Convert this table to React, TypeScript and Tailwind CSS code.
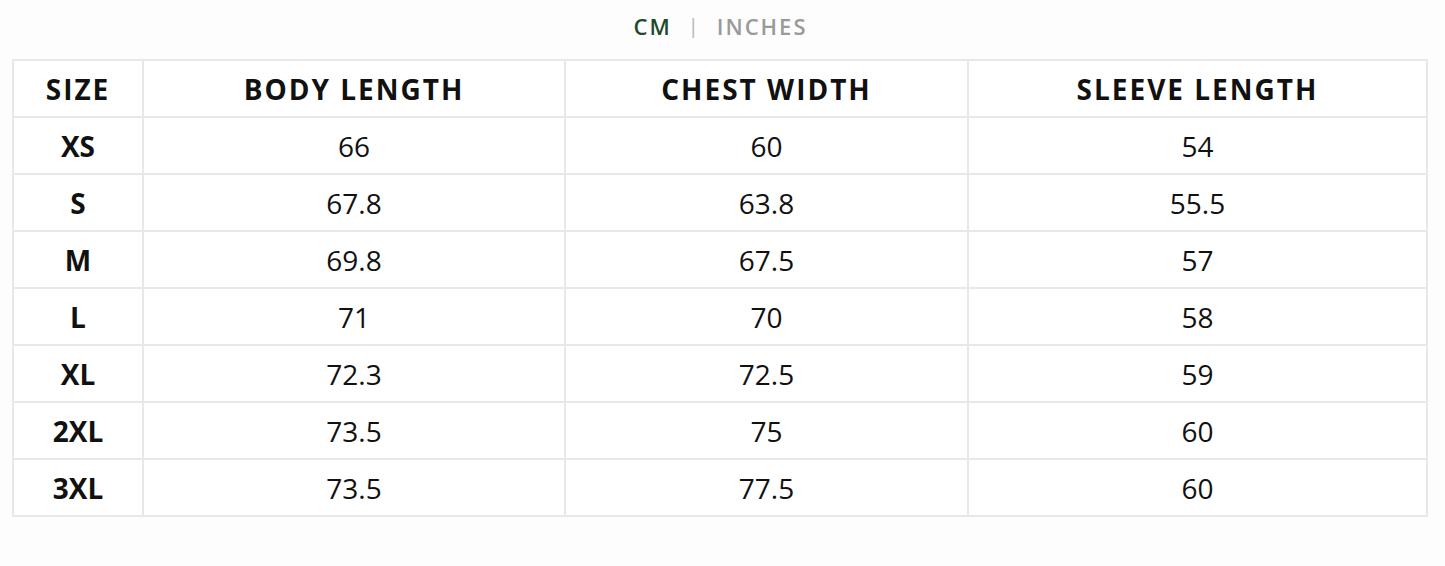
import { useState } from "react"

type Row = { size: string; body: string; chest: string; sleeve: string }

const rows: Row[] = [
  { size: "XS", body: "66", chest: "60", sleeve: "54" },
  { size: "S", body: "67.8", chest: "63.8", sleeve: "55.5" },
  { size: "M", body: "69.8", chest: "67.5", sleeve: "57" },
  { size: "L", body: "71", chest: "70", sleeve: "58" },
  { size: "XL", body: "72.3", chest: "72.5", sleeve: "59" },
  { size: "2XL", body: "73.5", chest: "75", sleeve: "60" },
  { size: "3XL", body: "73.5", chest: "77.5", sleeve: "60" },
]

const App = () => {
  const [unit, setUnit] = useState<"cm" | "in">("cm")

  return (
    <div className="min-h-[566px] w-full bg-[#fdfdfd] font-['Open_Sans',sans-serif] text-[#111]">
      <div className="flex h-[52px] items-center justify-center gap-[16px] pr-[4px] text-[22px] font-semibold tracking-[2px]">
        <button
          onClick={() => setUnit("cm")}
          className={unit === "cm" ? "text-[#1c4a2c]" : "text-[#9a9a9a]"}
        >
          CM
        </button>
        <span className="text-[#b5b5b5] text-[20px] font-normal">|</span>
        <button
          onClick={() => setUnit("in")}
          className={unit === "in" ? "text-[#1c4a2c]" : "text-[#9a9a9a]"}
        >
          INCHES
        </button>
      </div>
      <div className="pl-[12px] pt-[7px]">
        <table className="w-[1416px] border-collapse bg-white text-[28px]">
          <thead>
            <tr className="h-[57px]">
              <th className="w-[130px] border-2 border-[#e8e8e8] font-bold tracking-[2px]">SIZE</th>
              <th className="w-[422px] border-2 border-[#e8e8e8] font-bold tracking-[2px]">BODY LENGTH</th>
              <th className="w-[403px] border-2 border-[#e8e8e8] font-bold tracking-[2px]">CHEST WIDTH</th>
              <th className="border-2 border-[#e8e8e8] font-bold tracking-[2px]">SLEEVE LENGTH</th>
            </tr>
          </thead>
          <tbody>
            {rows.map((r) => (
              <tr key={r.size} className="h-[57px] text-center">
                <td className="border-2 border-[#e8e8e8] font-bold">{r.size}</td>
                <td className="border-2 border-[#e8e8e8]">{r.body}</td>
                <td className="border-2 border-[#e8e8e8]">{r.chest}</td>
                <td className="border-2 border-[#e8e8e8]">{r.sleeve}</td>
              </tr>
            ))}
          </tbody>
        </table>
      </div>
    </div>
  )
}

export default App
